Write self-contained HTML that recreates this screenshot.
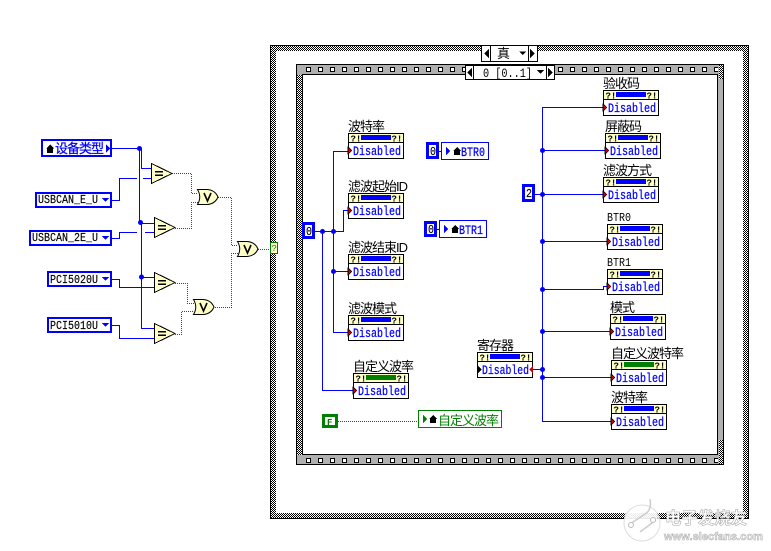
<!DOCTYPE html>
<html><head><meta charset="utf-8"><style>
html,body{margin:0;padding:0;background:#fff;width:771px;height:551px;overflow:hidden}
svg{display:block}
text{font-family:"Liberation Sans","WenQuanYi Zen Hei","Noto Sans CJK SC",sans-serif;font-size:13px;letter-spacing:-1px;fill:#000}
.m{font-family:"Liberation Mono","Noto Sans CJK SC",monospace;font-size:13px;letter-spacing:0}
.u{font-family:"Liberation Mono",monospace;font-size:12px;letter-spacing:0;stroke:#000;stroke-width:.15}
.d{fill:#00f;stroke:#00f;stroke-width:.25}
.f{fill:#00f}
.b{stroke:#00f;stroke-width:1;fill:none}
.bk{stroke:#00f;stroke-width:3;fill:#fff}
.bc{stroke:#00f;stroke-width:2;fill:#fff}
.g{stroke:#007000;stroke-width:1;fill:none;stroke-dasharray:1 1}
.s{font-family:"Liberation Mono",monospace;font-size:9px;font-weight:bold;letter-spacing:0}
.l{font-family:"Liberation Mono",monospace;font-size:12px;letter-spacing:0}
</style></head><body>
<svg width="771" height="551" viewBox="0 0 771 551" xmlns="http://www.w3.org/2000/svg" shape-rendering="crispEdges">
<defs>
<pattern id="dz" width="2" height="2" patternUnits="userSpaceOnUse"><rect width="2" height="2" fill="#fff"/><rect width="1" height="1" fill="#000"/><rect x="1" y="1" width="1" height="1" fill="#000"/></pattern>
<pattern id="ht" x="306" y="0" width="12" height="600" patternUnits="userSpaceOnUse"><rect x=".5" y="67.5" width="4" height="4" fill="#fff" stroke="#000"/><rect x=".5" y="458.5" width="4" height="4" fill="#fff" stroke="#000"/></pattern>
<g id="c">
<rect x=".5" y=".5" width="55" height="25" fill="#fff" stroke="#000"/>
<rect x="1" y="1" width="54" height="8" fill="#ffffc8"/>
<path d="M0 9.5H56" stroke="#000" fill="none"/>
<text class="s" x="2.5" y="8.500">?!</text><text class="s" x="43.500" y="8.500">?!</text>
</g>
<g id="bb"><rect x="13" y="2" width="30" height="5" fill="#00f"/></g>
<g id="gb"><rect x="13" y="2" width="30" height="5" fill="#008000"/></g>
<g id="lt"><path d="M0 14L4 17.5L0 21Z" fill="#c00" stroke="#000" stroke-width=".6"/></g>
<g id="eq"><path d="M.5 .5L21 10.5L.5 20.5Z" fill="#ffffc8" stroke="#000"/><rect x="4" y="8" width="8" height="1.6" fill="#000"/><rect x="4" y="11.5" width="8" height="1.6" fill="#000"/></g>
<g id="or"><path d="M.5 .5H10Q18 1 21 8Q18 15 10 15.5H.5Q5 8 .5 .5Z" fill="#ffffc8" stroke="#000" shape-rendering="auto"/><path d="M7 4L10.5 12L14 4" stroke="#000" stroke-width="1.6" fill="none" shape-rendering="auto"/></g>
</defs>
<rect width="771" height="551" fill="#fff"/>

<!-- case frame -->
<rect x="270" y="45" width="479" height="474" fill="url(#dz)"/>
<path d="M270.500 519V45.500H749" stroke="#000" fill="none"/>
<path d="M270 518.500H749M748.500 45V519" stroke="#000" fill="none"/>
<rect x="276" y="51" width="467" height="462" fill="#fff"/>
<!-- sequence frame -->
<rect x="296.5" y="64.5" width="427" height="400" fill="#b0b0b0" stroke="#000"/>
<rect x="297" y="75" width="5" height="380" fill="url(#dz)"/>
<rect x="719" y="65" width="4" height="14" fill="url(#dz)"/>
<rect x="719" y="440" width="4" height="24" fill="url(#dz)"/>
<rect x="303" y="65" width="415" height="399" fill="url(#ht)"/>
<rect x="302.5" y="74.5" width="415" height="380" fill="#fff" stroke="#000"/>

<!-- case selector -->
<rect x="481.5" y="45.5" width="56" height="16" fill="#fff" stroke="#000"/>
<path d="M490.5 45V61M528.5 45V61" stroke="#000"/>
<path d="M484 53.500L489 49V58Z" fill="#000"/><path d="M535 53.500L530 49V58Z" fill="#000"/>
<path d="M519 51.500H526L522.500 55Z" fill="#000"/>
<text x="497" y="58">真</text>
<!-- seq selector -->
<rect x="465.5" y="65.5" width="89" height="14" fill="#fff" stroke="#000"/>
<path d="M473.500 65V79M546.500 65V79" stroke="#000"/>
<path d="M467 72.500L472 68V77Z" fill="#000"/><path d="M553 72.500L548 68V77Z" fill="#000"/>
<path d="M537 70H544L540.500 74Z" fill="#000"/>
<text class="m" x="483" y="77" textLength="49" lengthAdjust="spacingAndGlyphs">0 [0..1]</text>

<!-- left wires -->
<path class="b" d="M112 148.500H139.500V223.500H141.500V328.500H154M141.500 148.500V168.500H151M112 200.500H119.500V178.500H137M143 178.500H151M112 238.500H119.500V232.500H137M145 232.500H154M141 223.500H154M141 277.500H154M112 279.500H119.500V287.500H154M112 325.500H119.500V338.500H154"/>
<circle class="f" cx="139.500" cy="148.500" r="2.500" shape-rendering="auto"/>
<circle class="f" cx="140.500" cy="222.500" r="2.500" shape-rendering="auto"/>
<circle class="f" cx="141.500" cy="277" r="2.500" shape-rendering="auto"/>
<!-- dotted -->
<path class="g" d="M172 173.500H191.500V193.500H198M175 228.500H191.500V202.500H198M218 197.500H231.500V245.500H238M215 307.500H231.500V253.500H238M175 283.500H187.500V303.500H194M175 334.500H181.500V311.500H194M258 249.500H270"/>
<use href="#eq" x="151" y="163"/><use href="#eq" x="154" y="217"/><use href="#eq" x="154" y="272"/><use href="#eq" x="154" y="323"/>
<use href="#or" x="197" y="189"/><use href="#or" x="193" y="299"/><use href="#or" x="237" y="241"/>
<rect x="270.500" y="242.500" width="7" height="11" fill="#ffffc8" stroke="#008000"/>
<text class="s" x="271.500" y="251" style="fill:#008000;font-weight:normal">?</text>

<!-- left controls -->
<rect class="bc" x="42" y="140" width="69" height="16"/>
<path d="M46 148.500L50 144.500L54 148.500H53V153H47V148.500Z" fill="#000"/>
<text x="55" y="153" class="d">设备类型</text>
<path d="M106 144V153L110 148.500Z" fill="#00f"/>
<rect class="bc" x="36" y="193" width="75" height="14"/>
<text class="u" x="38" y="203" textLength="60" lengthAdjust="spacingAndGlyphs">USBCAN_E_U</text>
<path d="M102 198H109L105.500 202Z" fill="#00f"/>
<rect class="bc" x="30" y="231" width="81" height="14"/>
<text class="u" x="32" y="241" textLength="66" lengthAdjust="spacingAndGlyphs">USBCAN_2E_U</text>
<path d="M102 236H109L105.500 240Z" fill="#00f"/>
<rect class="bc" x="48" y="272" width="63" height="14"/>
<text class="u" x="50" y="283" textLength="48" lengthAdjust="spacingAndGlyphs">PCI5020U</text>
<path d="M102 277H109L105.500 281Z" fill="#00f"/>
<rect class="bc" x="48" y="318" width="63" height="14"/>
<text class="u" x="50" y="329" textLength="48" lengthAdjust="spacingAndGlyphs">PCI5010U</text>
<path d="M102 323H109L105.500 327Z" fill="#00f"/>

<!-- inner left wires -->
<path class="b" d="M315 231.500H343.500V210.500H348M333.500 151.500H348M333.500 151V332.500H348M333 271.500H348M322.500 231V390.500H353"/>
<circle class="f" cx="322.500" cy="231.500" r="2.500" shape-rendering="auto"/>
<circle class="f" cx="333.500" cy="231.500" r="2.500" shape-rendering="auto"/>
<circle class="f" cx="333.500" cy="271.500" r="2.500" shape-rendering="auto"/>
<rect class="bk" x="303.500" y="223.500" width="10" height="14"/>
<text class="u" x="306" y="235" textLength="6" lengthAdjust="spacingAndGlyphs">0</text>

<!-- local vars -->
<path class="b" d="M439 151.500H441M437 229.500H439"/>
<rect class="bk" x="427.500" y="143.500" width="10" height="14"/>
<text class="u" x="430" y="155" textLength="6" lengthAdjust="spacingAndGlyphs">0</text>
<rect x="441.500" y="142.500" width="47" height="17" fill="#fff" stroke="#00f"/>
<path d="M446 147V155L450 151Z" fill="#00f"/>
<path d="M453 151L457 147L461 151H460V155H454V151Z" fill="#000"/>
<text class="m d" x="461" y="156" textLength="24" lengthAdjust="spacingAndGlyphs">BTR0</text>
<rect class="bk" x="425.500" y="222.500" width="10" height="13"/>
<text class="u" x="428" y="233" textLength="6" lengthAdjust="spacingAndGlyphs">0</text>
<rect x="439.500" y="220.500" width="47" height="17" fill="#fff" stroke="#00f"/>
<path d="M444 225V233L448 229Z" fill="#00f"/>
<path d="M451 229L455 225L459 229H458V233H452V229Z" fill="#000"/>
<text class="m d" x="459" y="234" textLength="24" lengthAdjust="spacingAndGlyphs">BTR1</text>

<!-- F constant -->
<path class="g" d="M338 421.500H418"/>
<rect x="323.500" y="415.500" width="13" height="11" fill="#fff" stroke="#008000" stroke-width="3"/>
<text class="s" x="327" y="425" style="fill:#008000">F</text>
<rect x="418.500" y="410.500" width="83" height="17" fill="#fff" stroke="#008000"/>
<path d="M423 415V423L427 419Z" fill="#008000"/>
<path d="M429 419L433 415L437 419H436V423H430V419Z" fill="#000"/>
<text x="438" y="425" style="fill:#008000">自定义波率</text>

<!-- right wires -->
<path class="b" d="M542.500 107V421.500H611M542 107.500H603M542 150.500H605M535 194.500H603M542 241.500H607M542 289.500H603.500V286.500H607M542 331.500H610M533 369.500H542M542 377.500H611"/>
<circle class="f" cx="542.500" cy="150.500" r="2.500" shape-rendering="auto"/>
<circle class="f" cx="542.500" cy="194.500" r="2.500" shape-rendering="auto"/>
<circle class="f" cx="542.500" cy="241.500" r="2.500" shape-rendering="auto"/>
<circle class="f" cx="542.500" cy="289.500" r="2.500" shape-rendering="auto"/>
<circle class="f" cx="542.500" cy="331.500" r="2.500" shape-rendering="auto"/>
<circle class="f" cx="542.500" cy="369.500" r="2.500" shape-rendering="auto"/>
<circle class="f" cx="542.500" cy="377.500" r="2.500" shape-rendering="auto"/>
<rect class="bk" x="523.500" y="185.500" width="10" height="15"/>
<text class="u" x="526" y="197" textLength="6" lengthAdjust="spacingAndGlyphs">2</text>

<!-- clusters -->
<g transform="translate(348,133)"><use href="#c"/><use href="#bb"/><use href="#lt"/><text class="m d" x="5" y="22" textLength="48" lengthAdjust="spacingAndGlyphs">Disabled</text><text x="0" y="-2">波特率</text></g>
<g transform="translate(348,193)"><use href="#c"/><use href="#bb"/><use href="#lt"/><text class="m d" x="5" y="22" textLength="48" lengthAdjust="spacingAndGlyphs">Disabled</text><text x="0" y="-2">滤波起始ID</text></g>
<g transform="translate(348,254)"><use href="#c"/><use href="#bb"/><use href="#lt"/><text class="m d" x="5" y="22" textLength="48" lengthAdjust="spacingAndGlyphs">Disabled</text><text x="0" y="-2">滤波结束ID</text></g>
<g transform="translate(348,315)"><use href="#c"/><use href="#bb"/><use href="#lt"/><text class="m d" x="5" y="22" textLength="48" lengthAdjust="spacingAndGlyphs">Disabled</text><text x="0" y="-2">滤波模式</text></g>
<g transform="translate(353,373)"><use href="#c"/><use href="#gb"/><use href="#lt"/><text class="m d" x="5" y="22" textLength="48" lengthAdjust="spacingAndGlyphs">Disabled</text><text x="0" y="-2">自定义波率</text></g>
<g transform="translate(477,352)"><use href="#c"/><use href="#bb"/><path d="M1 14L5 17.500L1 21Z" fill="#000"/><path d="M52 17.500L56 14V21Z" fill="#c00"/><text class="m d" x="5" y="22" textLength="47" lengthAdjust="spacingAndGlyphs">Disabled</text><text x="0" y="-2">寄存器</text></g>
<g transform="translate(603,90)"><use href="#c"/><use href="#bb"/><use href="#lt"/><text class="m d" x="5" y="22" textLength="48" lengthAdjust="spacingAndGlyphs">Disabled</text><text x="0" y="-2">验收码</text></g>
<g transform="translate(605,133)"><use href="#c"/><use href="#bb"/><use href="#lt"/><text class="m d" x="5" y="22" textLength="48" lengthAdjust="spacingAndGlyphs">Disabled</text><text x="0" y="-2">屏蔽码</text></g>
<g transform="translate(603,177)"><use href="#c"/><use href="#bb"/><use href="#lt"/><text class="m d" x="5" y="22" textLength="48" lengthAdjust="spacingAndGlyphs">Disabled</text><text x="0" y="-2">滤波方式</text></g>
<g transform="translate(607,224)"><use href="#c"/><use href="#bb"/><use href="#lt"/><text class="m d" x="5" y="22" textLength="48" lengthAdjust="spacingAndGlyphs">Disabled</text><text class="l" x="0" y="-3" textLength="24" lengthAdjust="spacingAndGlyphs">BTR0</text></g>
<g transform="translate(607,269)"><use href="#c"/><use href="#bb"/><use href="#lt"/><text class="m d" x="5" y="22" textLength="48" lengthAdjust="spacingAndGlyphs">Disabled</text><text class="l" x="0" y="-3" textLength="24" lengthAdjust="spacingAndGlyphs">BTR1</text></g>
<g transform="translate(610,314)"><use href="#c"/><use href="#bb"/><use href="#lt"/><text class="m d" x="5" y="22" textLength="48" lengthAdjust="spacingAndGlyphs">Disabled</text><text x="0" y="-2">模式</text></g>
<g transform="translate(611,360)"><use href="#c"/><use href="#gb"/><use href="#lt"/><text class="m d" x="5" y="22" textLength="48" lengthAdjust="spacingAndGlyphs">Disabled</text><text x="0" y="-2">自定义波特率</text></g>
<g transform="translate(611,404)"><use href="#c"/><use href="#bb"/><use href="#lt"/><text class="m d" x="5" y="22" textLength="48" lengthAdjust="spacingAndGlyphs">Disabled</text><text x="0" y="-2">波特率</text></g>

<!-- watermark -->
<g shape-rendering="auto">
<rect x="625" y="512" width="32" height="8" fill="#fff" fill-opacity=".65"/>
<circle cx="642" cy="523" r="18" fill="#fff" fill-opacity=".75" stroke="#ddd" stroke-width="1"/>
<path d="M650 499Q652 510 645 514L630 524M656 520L640 532" stroke="#ccc" stroke-width="1.500" fill="none"/>
<circle cx="631" cy="525" r="2.500" fill="#fff" stroke="#bbb"/><circle cx="653" cy="520" r="2.500" fill="#fff" stroke="#bbb"/>
<text x="665" y="524" style="font-size:17px;letter-spacing:0;font-weight:bold;fill:#fff;stroke:#aaa;stroke-width:.6" textLength="82" lengthAdjust="spacingAndGlyphs">电子发烧友</text>
<text x="664" y="540" style="font-size:11px;letter-spacing:0;font-weight:bold;fill:#eee;stroke:#aaa;stroke-width:.5" textLength="99" lengthAdjust="spacingAndGlyphs">www.elecfans.com</text>
</g>
</svg>
</body></html>
